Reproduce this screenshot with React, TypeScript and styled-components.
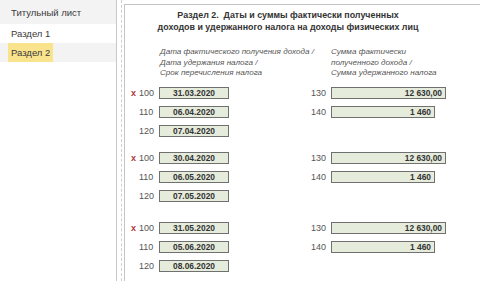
import React from "react";
import styled, { createGlobalStyle } from "styled-components";

type Line = {
  code: string;
  date: string;
  sumCode?: string;
  sum?: string;
  sumWidth?: number;
  marked?: boolean;
};

type Block = {
  gap: number;
  lines: Line[];
};

const blocks: Block[] = [
  {
    gap: 5,
    lines: [
      { code: "100", date: "31.03.2020", sumCode: "130", sum: "12 630,00", sumWidth: 115, marked: true },
      { code: "110", date: "06.04.2020", sumCode: "140", sum: "1 460", sumWidth: 104 },
      { code: "120", date: "07.04.2020" },
    ],
  },
  {
    gap: 8,
    lines: [
      { code: "100", date: "30.04.2020", sumCode: "130", sum: "12 630,00", sumWidth: 115, marked: true },
      { code: "110", date: "06.05.2020", sumCode: "140", sum: "1 460", sumWidth: 104 },
      { code: "120", date: "07.05.2020" },
    ],
  },
  {
    gap: 13,
    lines: [
      { code: "100", date: "31.05.2020", sumCode: "130", sum: "12 630,00", sumWidth: 115, marked: true },
      { code: "110", date: "05.06.2020", sumCode: "140", sum: "1 460", sumWidth: 104 },
      { code: "120", date: "08.06.2020" },
    ],
  },
];

const App = () => {
  return (
    <Page>
      <GlobalStyle />
      <Sidebar>
        <NavItem $shaded $tall>
          <NavLabel>Титульный лист</NavLabel>
        </NavItem>
        <NavItem>
          <NavLabel>Раздел 1</NavLabel>
        </NavItem>
        <NavItem $shaded>
          <NavLabel $active>Раздел 2</NavLabel>
        </NavItem>
      </Sidebar>
      <Splitter />
      <FormPanel>
        <Content>
          <Title>
            Раздел 2.&nbsp; Даты и суммы фактически полученных
            <br />
            доходов и удержанного налога на доходы физических лиц
          </Title>
          <Captions>
            <Caption $width={171}>
              Дата фактического получения дохода /
              <br />
              Дата удержания налога /
              <br />
              Срок перечисления налога
            </Caption>
            <Caption>
              Сумма фактически
              <br />
              полученного дохода /
              <br />
              Сумма удержанного налога
            </Caption>
          </Captions>
          {blocks.map((block, bi) => (
            <Group key={bi} $gap={block.gap}>
              {block.lines.map((line) => (
                <Row key={line.code}>
                  <LeftCell>
                    <Mark>{line.marked ? "x" : ""}</Mark>
                    <Code>{line.code}</Code>
                    <Field $width={70}>{line.date}</Field>
                  </LeftCell>
                  {line.sumCode && (
                    <RightCell>
                      <Code>{line.sumCode}</Code>
                      <Field $width={line.sumWidth} $right>
                        {line.sum}
                      </Field>
                    </RightCell>
                  )}
                </Row>
              ))}
            </Group>
          ))}
        </Content>
      </FormPanel>
    </Page>
  );
};

const GlobalStyle = createGlobalStyle`
  html, body {
    margin: 0;
    padding: 0;
    background: #fff;
  }
  body {
    font-family: "Liberation Sans", Arial, sans-serif;
    color: #333;
  }
`;

const Page = styled.div`
  display: flex;
  width: 480px;
  height: 281px;
  overflow: hidden;
  background: #fff;
`;

const Sidebar = styled.div`
  width: 116px;
  flex-shrink: 0;
  border-right: 1px solid #c9c9c9;
`;

const NavItem = styled.div<{ $shaded?: boolean; $tall?: boolean }>`
  height: ${(p) => (p.$tall ? 24 : 19)}px;
  display: flex;
  align-items: center;
  padding-left: 8px;
  background: ${(p) => (p.$shaded ? "#f3f3f3" : "#fff")};
`;

const NavLabel = styled.span<{ $active?: boolean }>`
  font-size: 9.5px;
  color: #3a3a3a;
  padding: 0 3px;
  line-height: 19px;
  background: ${(p) => (p.$active ? "#f9e38c" : "transparent")};
`;

const Splitter = styled.div`
  width: 0;
  margin: 0 2px 0 4px;
  border-left: 1px dashed #d0d0d0;
`;

const FormPanel = styled.div`
  flex: 1;
  margin-top: 4px;
  border-top: 1px solid #c4c4c4;
  border-left: 1px solid #c4c4c4;
  padding-top: 5px;
`;

const Content = styled.div`
  width: 326px;
`;

const Title = styled.div`
  text-align: center;
  font-weight: bold;
  font-size: 8.9px;
  line-height: 11.5px;
  color: #333;
`;

const Captions = styled.div`
  display: flex;
  margin-top: 14px;
  padding-left: 35px;
`;

const Caption = styled.div<{ $width?: number }>`
  width: ${(p) => (p.$width ? `${p.$width}px` : "auto")};
  font-style: italic;
  font-size: 8.1px;
  line-height: 10.5px;
  color: #555;
`;

const Group = styled.div<{ $gap: number }>`
  margin-top: ${(p) => p.$gap}px;
`;

const Row = styled.div`
  display: flex;
  align-items: center;
  height: 19px;
`;

const LeftCell = styled.div`
  width: 180px;
  padding-left: 6px;
  display: flex;
  align-items: center;
`;

const RightCell = styled.div`
  display: flex;
  align-items: center;
`;

const Mark = styled.span`
  width: 8px;
  font-size: 9px;
  font-weight: bold;
  color: #b0353a;
`;

const Code = styled.span`
  width: 14px;
  margin-right: 6px;
  text-align: right;
  font-size: 9px;
  color: #555;
`;

const Field = styled.div<{ $width?: number; $right?: boolean }>`
  box-sizing: border-box;
  width: ${(p) => p.$width}px;
  height: 12px;
  border: 1px solid #707070;
  background: #e6ecdc;
  font-size: 8.4px;
  font-weight: bold;
  line-height: 10px;
  color: #333;
  text-align: ${(p) => (p.$right ? "right" : "center")};
  padding: 0 3px;
`;

export default App;
